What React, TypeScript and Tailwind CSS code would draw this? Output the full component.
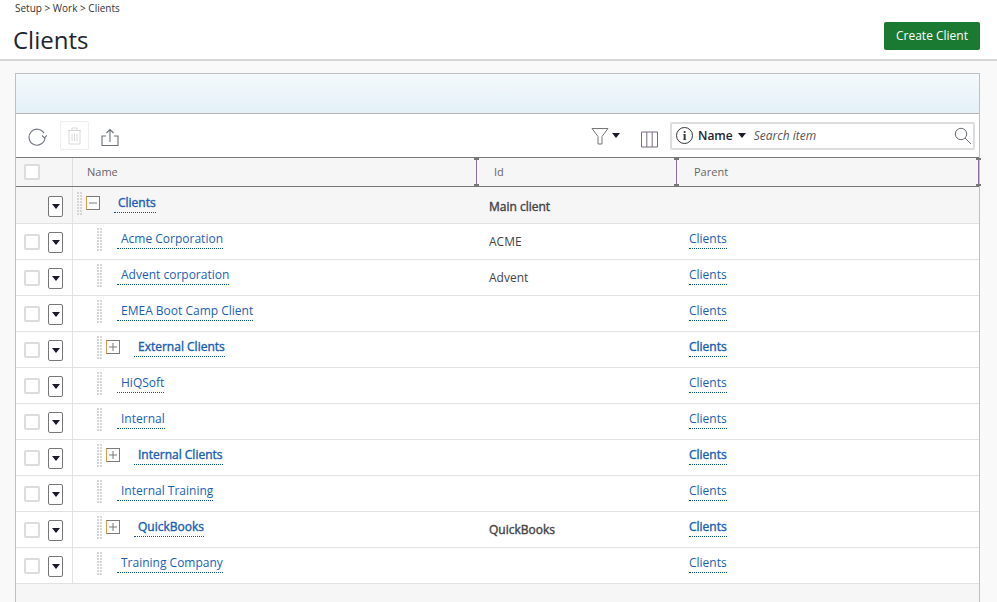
import React from "react";

const Caret = ({ className = "" }: { className?: string }) => (
  <span className={"inline-block w-0 h-0 border-l-[4.5px] border-r-[4.5px] border-t-[5px] border-l-transparent border-r-transparent border-t-[#1a1a2a] " + className} />
);

const Check = () => <span className="block w-[16px] h-[16px] bg-white border-2 border-[#dcdcdc] rounded-[2px]" />;

const Menu = () => (
  <span className="flex items-center justify-center w-[15px] h-[21px] bg-white border border-[#777] rounded-[2px]">
    <Caret />
  </span>
);

const Grip = () => (
  <span className="flex gap-[1px] w-[5px] h-[23px]">
    <span className="block w-[2px] h-full bg-[repeating-linear-gradient(to_bottom,#d6d6d6_0,#d6d6d6_2px,transparent_2px,transparent_3px)]" />
    <span className="block w-[2px] h-full bg-[repeating-linear-gradient(to_bottom,#d6d6d6_0,#d6d6d6_2px,transparent_2px,transparent_3px)]" />
  </span>
);

const Box = ({ open }: { open?: boolean }) => (
  <svg width="14" height="14" viewBox="0 0 14 14" className="block shrink-0">
    <rect x="0.5" y="0.5" width="13" height="13" fill="#fff" stroke="#7b7b7b" />
    <path d="M0.5 0.5V13.5" stroke="#d9994f" />
    <path d="M3 7H11" stroke="#7b7b7b" />
    {!open && <path d="M7 3V11" stroke="#7b7b7b" />}
  </svg>
);

const Link = ({ children, bold, className = "" }: { children: string; bold?: boolean; className?: string }) => (
  <a className={"inline-block text-[12px] leading-[16px] text-[#1a5fb4] border-b border-dotted border-[#0b4f9e] pb-[1px] whitespace-nowrap " + (bold ? "font-medium [-webkit-text-stroke:0.4px_#1a5fb4] " : "") + className}>
    {children}
  </a>
);

type R = { name: string; id?: string; kind?: "parent" };
const rows: R[] = [
  { name: "Acme Corporation", id: "ACME" },
  { name: "Advent corporation", id: "Advent" },
  { name: "EMEA Boot Camp Client" },
  { name: "External Clients", kind: "parent" },
  { name: "HiQSoft" },
  { name: "Internal" },
  { name: "Internal Clients", kind: "parent" },
  { name: "Internal Training" },
  { name: "QuickBooks", id: "QuickBooks", kind: "parent" },
  { name: "Training Company" },
];

const Handle = () => (
  <span className="flex flex-col items-center self-stretch w-[3px] shrink-0 -ml-[1px]">
    <span className="w-[5px] h-[2px] bg-[#777]" />
    <span className="flex-1 w-[1px] bg-[#8c6f96]" />
    <span className="w-[5px] h-[2px] bg-[#777]" />
  </span>
);

export default function App() {
  return (
    <div className="w-[997px] h-[602px] overflow-hidden bg-[#f9f9f9] font-['Open_Sans',sans-serif] text-[#333]">
      <header className="h-[61px] bg-white border-b-2 border-[#d6d6d6] pl-[13px] pr-[17px] flex justify-between">
        <div>
          <div className="pt-[2px] pl-[2px] text-[10px] leading-[13px] text-[#333]">Setup &gt; Work &gt; Clients</div>
          <h1 className="mt-[10px] text-[24px] leading-[30px] text-[#1c2530]">Clients</h1>
        </div>
        <button className="mt-[22px] w-[96px] h-[28px] bg-[#1a7a32] text-white text-[12px] rounded-[2px]">Create Client</button>
      </header>

      <main className="mt-[12px] ml-[15px] w-[965px] h-[529px] border border-[#c0c0c0] border-b-0 bg-[#f6f6f6] flex flex-col">
        <div className="h-[40px] shrink-0 bg-gradient-to-b from-[#f4f9fc] to-[#e4f1f8] border-b border-[#b4b4b4]" />

        <div className="h-[43px] shrink-0 bg-white flex items-center pl-[11px] pr-[4px]">
          <svg width="20" height="20" viewBox="0 0 20 20" fill="none" stroke="#6f7680" strokeWidth="1.1" className="mr-[13px]">
            <path d="M17 7.2A8 8 0 1 0 18 12" />
            <path d="M15 9.5l2.5 2.5 2.2-2.6" />
          </svg>
          <span className="w-[29px] h-[29px] border border-[#eeeeee] rounded-[2px] flex items-center justify-center mr-[12px]">
            <svg width="15" height="18" viewBox="0 0 15 18" fill="none" stroke="#d8d8d8" strokeWidth="1">
              <path d="M1 3.5H14M5 3.5V1H10V3.5M2 3.5V17H13V3.5M5 6.5V14M7.5 6.5V14M10 6.5V14" />
            </svg>
          </span>
          <svg width="18" height="19" viewBox="0 0 18 19" fill="none" stroke="#6a6f78" strokeWidth="1.1" className="mt-[3px]">
            <path d="M5 8H1V17.5H17V8H13M9 14V1.5M5.5 5L9 1.5 12.5 5" />
          </svg>

          <div className="ml-auto flex items-center">
            <svg width="18" height="18" viewBox="0 0 18 18" fill="none" stroke="#777" strokeWidth="1">
              <path d="M1 1.5H17L11 9.5V17H7V9.5Z" />
            </svg>
            <Caret className="ml-[3px]" />
            <svg width="17" height="17" viewBox="0 0 17 17" fill="none" stroke="#7a6a80" strokeWidth="1" className="ml-[21px] mt-[7px]">
              <path d="M0.5 1H16.5V16H0.5ZM5.8 1V16M11.2 1V16" />
            </svg>
            <div className="ml-[12px] w-[305px] h-[28px] bg-white border-2 border-[#dcdcdc] rounded-[2px] flex items-center pl-[4px] pr-[1px]">
              <span className="w-[17px] h-[17px] rounded-full border border-[#333] flex items-center justify-center text-[13px] leading-none font-semibold font-['Liberation_Serif',serif] shrink-0">i</span>
              <span className="ml-[5px] text-[12px] font-semibold text-[#1c2530]">Name</span>
              <Caret className="ml-[5px]" />
              <span className="ml-[8px] text-[12px] italic text-[#555]">Search item</span>
              <svg width="18" height="18" viewBox="0 0 18 18" fill="none" stroke="#6a6f78" strokeWidth="1" className="ml-auto">
                <circle cx="7" cy="7" r="5.7" />
                <path d="M11 11L17 17" />
              </svg>
            </div>
          </div>
        </div>

        <div className="h-[30px] shrink-0 flex bg-[#f6f6f6] border-y border-[#777] text-[11px] text-[#666]">
          <div className="w-[57px] shrink-0 border-r border-[#dedede] flex items-center pl-[8px]"><Check /></div>
          <div className="w-[403px] shrink-0 flex items-center pl-[14px]">Name</div>
          <div className="w-[200px] shrink-0 flex items-center"><Handle /><span className="pl-[16px]">Id</span></div>
          <div className="flex-1 flex items-center"><Handle /><span className="pl-[16px]">Parent</span><span className="ml-auto self-stretch flex -mr-[1px]"><Handle /></span></div>
        </div>

        <div className="h-[37px] shrink-0 flex bg-[#f6f6f6] border-b border-[#e2e2e2]">
          <div className="w-[57px] shrink-0 border-r border-[#e2e2e2] flex items-center justify-end pr-[9px] pt-[2px]"><Menu /></div>
          <div className="w-[403px] shrink-0 flex pl-[4px] pt-[5px]">
            <Grip />
            <span className="ml-[4px] mt-[4px]"><Box open /></span>
            <Link bold className="ml-[14px] mt-[3px] self-start pl-[4px] pr-0">Clients</Link>
          </div>
          <div className="flex-1 flex items-center pl-[13px] pt-[3px] text-[12px] font-medium [-webkit-text-stroke:0.4px_#444] text-[#444]">Main client</div>
        </div>

        {rows.map((r) => (
          <div key={r.name} className="h-[36px] shrink-0 flex bg-white border-b border-[#e2e2e2]">
            <div className="w-[57px] shrink-0 border-r border-[#e2e2e2] flex items-center justify-between pl-[8px] pr-[9px] pt-[1px]"><Check /><Menu /></div>
            <div className="w-[403px] shrink-0 flex pl-[24px] pt-[4px]">
              <Grip />
              {r.kind === "parent" ? (
                <>
                  <span className="ml-[4px] mt-[4px]"><Box /></span>
                  <Link bold className="ml-[14px] mt-[3px] self-start pl-[4px]">{r.name}</Link>
                </>
              ) : (
                <Link className="ml-[15px] mt-[3px] self-start pl-[4px]">{r.name}</Link>
              )}
            </div>
            <div className={"w-[200px] shrink-0 flex items-center pl-[13px] pt-[1px] text-[12px] text-[#444] " + (r.kind ? "font-medium [-webkit-text-stroke:0.4px_#444]" : "")}>{r.id}</div>
            <div className="flex-1 flex items-start pl-[13px] pt-[7px]"><Link bold={!!r.kind}>Clients</Link></div>
          </div>
        ))}
      </main>
    </div>
  );
}
